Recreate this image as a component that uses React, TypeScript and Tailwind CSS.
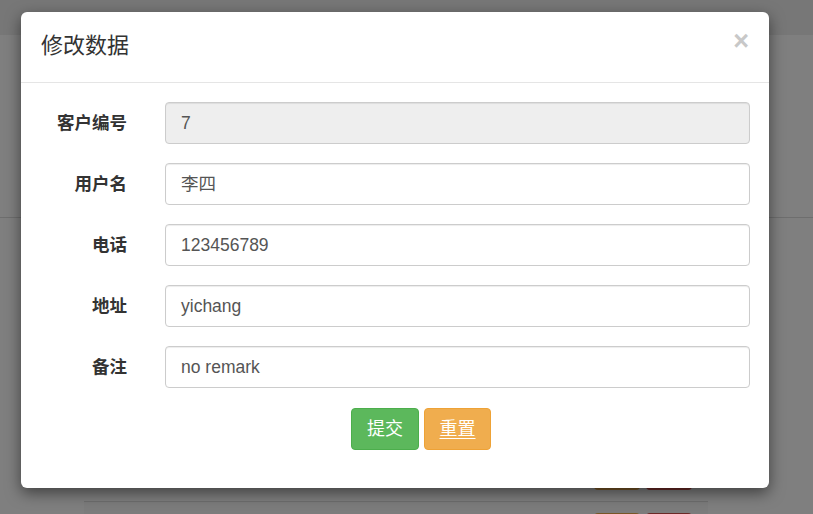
import React from 'react';

const fields = [
  { label: '客户编号', value: '7', disabled: true },
  { label: '用户名', value: '李四' },
  { label: '电话', value: '123456789' },
  { label: '地址', value: 'yichang' },
  { label: '备注', value: 'no remark' },
];

const cjk = "font-['Liberation_Sans','Noto_Sans_CJK_SC',sans-serif]";

function RowActions() {
  return (
    <div className="flex justify-end gap-[6px] pr-[16px]">
      <div className="w-[46px] h-[34px] rounded-[4px] bg-[#f0ad4e]" />
      <div className="w-[46px] h-[34px] rounded-[4px] bg-[#d9534f]" />
    </div>
  );
}

export default function App() {
  return (
    <div className={`relative w-[813px] h-[514px] overflow-hidden bg-white ${cjk}`}>
      {/* page underneath */}
      <div className="h-[35px] bg-[#eee]" />
      <div className="h-[183px] border-b border-[#ddd]" />
      <div className="h-[238px]" />
      <div className="ml-[84px] w-[624px]">
        <div className="pb-[11px]">
          <RowActions />
        </div>
        <div className="border-t border-[#ddd] bg-[#f9f9f9] pt-[11px]">
          <RowActions />
        </div>
      </div>

      {/* backdrop */}
      <div className="absolute inset-0 bg-black/50" />

      {/* modal */}
      <div className="absolute left-[21px] top-[12px] w-[748px] bg-white rounded-[6px] shadow-[0_5px_15px_rgba(0,0,0,0.5)]">
        <div className="h-[71px] flex items-center justify-between pl-[20px] pr-[20px] border-b border-[#e5e5e5]">
          <h4 className="text-[22px] font-normal text-[#333] leading-none -mt-[2px]">修改数据</h4>
          <span className="text-[27px] font-bold text-[#c8c8c8] leading-none -mt-[12px]">×</span>
        </div>
        <div className="pt-[19px] pb-[38px]">
          <div className="flex flex-col gap-[19px] pl-[20px] pr-[19px]">
            {fields.map(f => (
              <div key={f.label} className="flex items-center gap-[38px]">
                <label className="w-[86px] text-right text-[17.5px] font-bold text-[#333]">{f.label}</label>
                <div
                  className={`flex-1 h-[42px] flex items-center pl-[15px] rounded-[4px] border border-[#ccc] shadow-[inset_0_1px_1px_rgba(0,0,0,0.075)] text-[17.5px] text-[#555] ${f.disabled ? 'bg-[#eee]' : 'bg-white'}`}
                >
                  {f.value}
                </div>
              </div>
            ))}
          </div>
          <div className="flex gap-[5px] pl-[330px] mt-[20px]">
            <button className="w-[68px] h-[42px] rounded-[4px] bg-[#5cb85c] border border-[#4cae4c] text-white text-[18px]">
              提交
            </button>
            <button className="w-[67px] h-[42px] rounded-[4px] bg-[#f0ad4e] border border-[#eea236] text-white text-[18px] underline underline-offset-[3px]">
              重置
            </button>
          </div>
        </div>
      </div>
    </div>
  );
}
